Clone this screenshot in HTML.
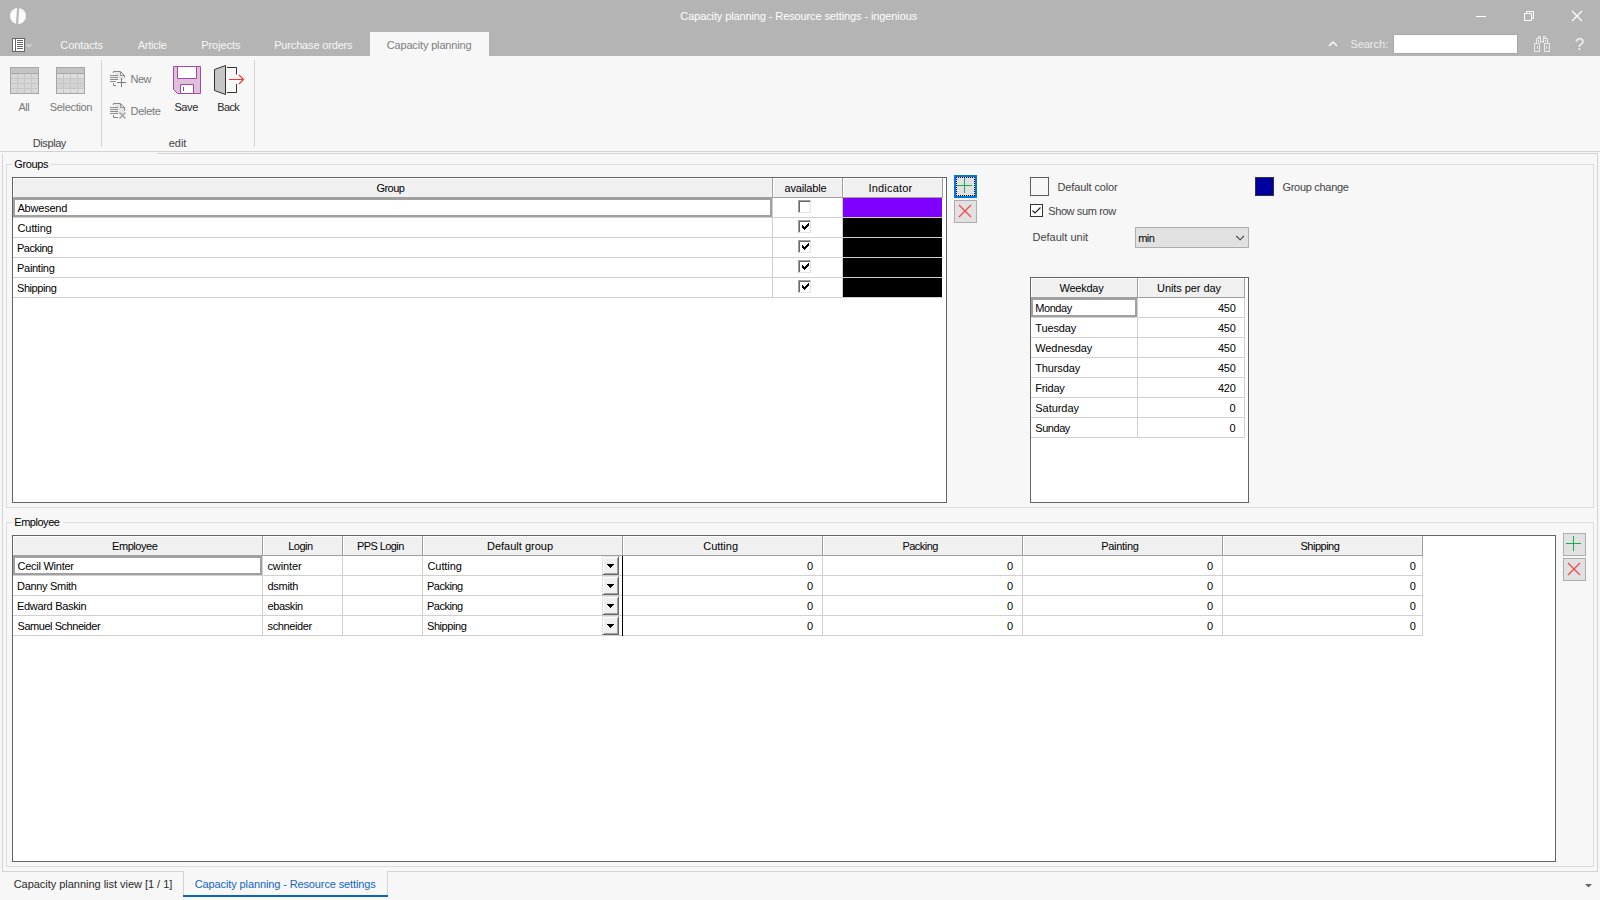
<!DOCTYPE html>
<html lang="en">
<head>
<meta charset="utf-8">
<title>Capacity planning - Resource settings - ingenious</title>
<style>
*{box-sizing:border-box;margin:0;padding:0}
html,body{width:1600px;height:900px;overflow:hidden;background:#f7f7f7}
body{position:relative;font-family:"Liberation Sans",sans-serif;font-size:11px;color:#000;line-height:13px}
.a{position:absolute;white-space:nowrap}
.t{position:absolute;white-space:nowrap;height:20px;line-height:20px}
.c{text-align:center}
.r{text-align:right}
#titlebar{left:0;top:0;width:1600px;height:56px;background:#b4b4b4}
.wt{color:#fff}
.tab{color:#f6f6f6}
.hl{position:absolute;height:1px;background:#d4d4d4}
.vl{position:absolute;width:1px;background:#d4d4d4}
.grid{position:absolute;border:1px solid #646464;background:#fff}
.hd{position:absolute;background:#f0f0f0;border-left:1px solid #fff;border-top:1px solid #fff;height:19px;text-align:center;line-height:18px}
.gl{position:absolute;background:#d0d0d0}
.hs{position:absolute;background:#a0a0a0}
.btn{position:absolute;width:23px;height:23px;background:#e1e1e1;border:1px solid #adadad}
.gb{position:absolute;border:1px solid #dcdcdc}
.gbl{position:absolute;background:#f7f7f7;padding:0 2px;height:13px;line-height:13px}
.cb3{position:absolute;width:13px;height:13px;background:#fff;border:1px solid;border-color:#a0a0a0 #e3e3e3 #e3e3e3 #a0a0a0;box-shadow:inset 1px 1px 0 #696969}
.dd{position:absolute;width:17px;height:19px;background:#f0f0f0;border:1px solid;border-color:#e3e3e3 #696969 #696969 #e3e3e3;box-shadow:inset 1px 1px 0 #fff,inset -1px -1px 0 #a0a0a0}
.dim{color:#808080}
.lbl{color:#444}
</style>
</head>
<body>
<div id="titlebar" class="a"></div>
<header aria-label="Title bar and main menu">
<svg class="a" style="left:9px;top:7px" width="18" height="18" viewBox="0 0 18 18"><ellipse cx="9" cy="9" rx="8" ry="8" fill="#fafafa"/><path d="M8.100 0.500 L10.400 0.500 L9.100 17.500 L6.900 17.500 Z" fill="#b9b9b9"/></svg>
<div class="t" style="left:680.30px;top:6px;letter-spacing:-0.110px;color:#fff">Capacity planning - Resource settings - ingenious</div>
<svg class="a" style="left:1470px;top:5px" width="120" height="22" viewBox="0 0 120 22" fill="none" stroke="#fff" stroke-width="1"><path d="M6 11.500 H16"/><path d="M54.500 8.500 H61.500 V15.500 H54.500 Z"/><path d="M56.500 8.500 V6.500 H63.500 V13.500 H61.500"/><path d="M102 6 L112 16 M112 6 L102 16" stroke-width="1.150"/></svg>
<svg class="a" style="left:12px;top:38px" width="22" height="14" viewBox="0 0 22 14" fill="none"><rect x="0.5" y="0.5" width="12" height="13" fill="#fff" stroke="#666"/><path d="M3.500 1 V13" stroke="#666"/><path d="M5 2.500 H11 M5 4.500 H11 M5 6.500 H11 M5 8.500 H11 M5 10.500 H11" stroke="#666"/><path d="M14.500 6.100 L17 8.600 L19.500 6.100" stroke="#dadada" stroke-width="1.100"/></svg>
<div class="t" style="left:60.30px;top:35px;letter-spacing:-0.100px;color:#f6f6f6">Contacts</div>
<div class="t" style="left:137.70px;top:35px;letter-spacing:-0.217px;color:#f6f6f6">Article</div>
<div class="t" style="left:201.20px;top:35px;letter-spacing:-0.043px;color:#f6f6f6">Projects</div>
<div class="t" style="left:274.20px;top:35px;letter-spacing:-0.164px;color:#f6f6f6">Purchase orders</div>
<div class="a" style="left:370px;top:32px;width:119px;height:24px;background:#f7f7f7"></div>
<div class="t" style="left:386.70px;top:35px;letter-spacing:-0.156px;color:#7d7d7d">Capacity planning</div>
<svg class="a" style="left:1326px;top:38px" width="14" height="12" viewBox="0 0 14 12" fill="none" stroke="#fff" stroke-width="1.400"><path d="M3 8 L7 4 L11 8"/></svg>
<div class="t" style="left:1350.40px;top:34px;letter-spacing:-0.033px;color:#ececec">Search:</div>
<div class="a" style="left:1393px;top:34px;width:125px;height:20px;background:#fff;border:1px solid #a9a9a9"></div>
<svg class="a" style="left:1533px;top:35px" width="18" height="18" viewBox="0 0 18 18" fill="none" stroke="#ebebeb" stroke-width="1"><path d="M1.500 8.500 H6.500 V16.500 H1.500 Z M11.500 8.500 H16.500 V16.500 H11.500 Z"/><path d="M3.500 8.500 V3.500 H7.500 V8 M10.500 8 V3.500 H14.500 V8.500"/><path d="M5.500 3.500 V1.500 H7.500 V3.500 M10.500 3.500 V1.500 H12.500 V3.500"/><path d="M8 6.500 H10 M4.500 11 V14 M13.500 11 V14 M5.500 5 V7 M12.500 5 V7"/></svg>
<div class="a" style="left:1575px;top:35px;font-size:16.5px;line-height:18px;color:#f2f2f2">?</div>
</header>
<div role="toolbar" aria-label="Ribbon">
<svg class="a" style="left:10px;top:66px" width="30" height="30" viewBox="0 0 30 30"><rect x="0.5" y="1.500" width="28" height="26" fill="#d6d6d6" stroke="#a6a6a6"/><rect x="1" y="2" width="27" height="5" fill="#c3c3c3"/><path d="M1 7.500 H28" stroke="#a6a6a6" fill="none"/><path d="M1 12.500 H28 M1 17.500 H28 M1 22.500 H28 M7.500 8 V27 M14.500 8 V27 M21.500 8 V27" stroke="#c6c6c6" fill="none"/></svg>
<svg class="a" style="left:56px;top:66px" width="30" height="30" viewBox="0 0 30 30"><rect x="0.5" y="1.500" width="28" height="26" fill="#dedede" stroke="#a6a6a6"/><rect x="1" y="2" width="27" height="5" fill="#c3c3c3"/><rect x="1" y="13" width="27" height="9" fill="#d2d2d2"/><path d="M1 7.500 H28" stroke="#a6a6a6" fill="none"/><path d="M1 12.500 H28 M1 17.500 H28 M1 22.500 H28 M7.500 8 V27 M14.500 8 V27 M21.500 8 V27" stroke="#c6c6c6" fill="none"/></svg>
<div class="t" style="left:18.60px;top:97px;letter-spacing:-0.600px;color:#787878">All</div>
<div class="t" style="left:49.80px;top:97px;letter-spacing:-0.325px;color:#787878">Selection</div>
<div class="t" style="left:32.80px;top:133px;letter-spacing:-0.417px;color:#444">Display</div>
<div class="vl" style="left:101px;top:60px;height:87px"></div>
<svg class="a" style="left:109px;top:70px" width="18" height="18" viewBox="0 0 18 18" fill="none" stroke="#858585"><path d="M6 2 H11.500 L15 5.500 V10 H6 Z" fill="#e6e6e6" stroke="none"/><path d="M4.500 3 V1.500 H11.500 L15.500 5.500 V7.500"/><path d="M11.500 1.500 V5.500 H15.500" stroke="#909090"/><path d="M1 5.500 H9 M1 7.500 H9 M1 9.500 H9 M1 11.500 H7" stroke="#8c8c8c"/><path d="M4.500 13 V15.500 H7"/><path d="M12.500 8 V17 M8 12.500 H17" stroke="#7a7a7a"/></svg>
<svg class="a" style="left:109px;top:102px" width="18" height="18" viewBox="0 0 18 18" fill="none" stroke="#858585"><path d="M6 2 H11.500 L15 5.500 V12 H6 Z" fill="#e6e6e6" stroke="none"/><path d="M4.500 3 V1.500 H11.500 L15.500 5.500 V9"/><path d="M11.500 1.500 V5.500 H15.500" stroke="#909090"/><path d="M1 5.500 H9 M1 7.500 H9 M1 9.500 H9 M1 11.500 H9" stroke="#8c8c8c"/><path d="M4.500 13 V15.500 H9"/><path d="M10.500 10.500 L16.500 16.500 M16.500 10.500 L10.500 16.500" stroke="#9a9a9a" stroke-width="1.200"/></svg>
<div class="t" style="left:130.60px;top:69px;letter-spacing:-0.600px;color:#787878">New</div>
<div class="t" style="left:130.60px;top:101px;letter-spacing:-0.300px;color:#787878">Delete</div>
<svg class="a" style="left:172px;top:65px" width="30" height="30" viewBox="0 0 30 30"><path d="M1.500 1.500 H28.500 V28.500 H5.500 L1.500 24.500 Z" fill="#e0bfdc" stroke="#a349a4"/><path d="M5.500 1.500 H24.500 V13.500 H5.500 Z" fill="#fff" stroke="#a349a4"/><path d="M8.500 19.500 H21.500 V28.500 H8.500 Z" fill="#fff" stroke="#a349a4"/><path d="M11.500 22 V26" stroke="#666" fill="none"/></svg>
<svg class="a" style="left:213px;top:64px" width="34" height="32" viewBox="0 0 34 32" fill="none"><path d="M1.500 5.500 L12.500 1.500 V30.500 L1.500 26.500 Z" fill="#c6c5c3" stroke="#333"/><path d="M14 3.500 H23.500 V10.500 M23.500 20 V28.500 H14" stroke="#333"/><path d="M16 15.500 H30 M26 11 L30.500 15.500 L26 20" stroke="#f03a3a" stroke-width="1.200"/></svg>
<div class="t" style="left:174.40px;top:97px;letter-spacing:-0.367px;color:#2a2a2a">Save</div>
<div class="t" style="left:217.20px;top:97px;letter-spacing:-0.600px;color:#2a2a2a">Back</div>
<div class="t" style="left:168.70px;top:133px;color:#444">edit</div>
<div class="vl" style="left:254px;top:60px;height:87px"></div>
<div class="hl" style="left:0;top:151px;width:1600px"></div>
<div class="hl" style="left:157px;top:153px;width:1441px"></div>
<div class="vl" style="left:2px;top:154px;height:718px"></div>
<div class="vl" style="left:1597px;top:154px;height:718px"></div>
</div>
<main>
<section aria-label="Groups">
<div class="gb" style="left:6px;top:164px;width:1588px;height:344px"></div>
<div class="gbl" style="left:12px;top:158px;width:39px"></div>
<div class="t" style="left:14.30px;top:154px;letter-spacing:-0.360px">Groups</div>
<div class="grid" style="left:12px;top:177px;width:935px;height:326px"></div>
<div class="hd" style="left:13px;top:178px;width:759px"></div>
<div class="hs" style="left:772px;top:178px;width:1px;height:19px"></div>
<div class="t" style="left:376.40px;top:178px;letter-spacing:-0.500px">Group</div>
<div class="hd" style="left:773px;top:178px;width:69px"></div>
<div class="hs" style="left:842px;top:178px;width:1px;height:19px"></div>
<div class="t" style="left:784.50px;top:178px;letter-spacing:-0.162px">available</div>
<div class="hd" style="left:843px;top:178px;width:99px"></div>
<div class="hs" style="left:942px;top:178px;width:1px;height:19px"></div>
<div class="t" style="left:868.50px;top:178px;letter-spacing:0.188px">Indicator</div>
<div class="hs" style="left:13px;top:197px;width:930px;height:1px"></div>
<div class="t" style="left:17.50px;top:198px;letter-spacing:-0.214px">Abwesend</div>
<div class="gl" style="left:13px;top:217px;width:929px;height:1px"></div>
<div class="a" style="left:843px;top:198px;width:99px;height:19px;background:#8000ff"></div>
<div class="cb3" style="left:798px;top:200px"></div>
<div class="t" style="left:17.50px;top:218px;letter-spacing:-0.083px">Cutting</div>
<div class="gl" style="left:13px;top:237px;width:929px;height:1px"></div>
<div class="a" style="left:843px;top:218px;width:99px;height:19px;background:#000"></div>
<div class="cb3" style="left:798px;top:220px"></div>
<svg class="a" style="left:802px;top:223px" width="7" height="7" viewBox="0 0 7 7"><path d="M0 2h1v3h-1z M1 3h1v3h-1z M2 4h1v3h-1z M3 3h1v3h-1z M4 2h1v3h-1z M5 1h1v3h-1z M6 0h1v3h-1z" fill="#000" shape-rendering="crispEdges"/></svg>
<div class="t" style="left:17.00px;top:238px;letter-spacing:-0.500px">Packing</div>
<div class="gl" style="left:13px;top:257px;width:929px;height:1px"></div>
<div class="a" style="left:843px;top:238px;width:99px;height:19px;background:#000"></div>
<div class="cb3" style="left:798px;top:240px"></div>
<svg class="a" style="left:802px;top:243px" width="7" height="7" viewBox="0 0 7 7"><path d="M0 2h1v3h-1z M1 3h1v3h-1z M2 4h1v3h-1z M3 3h1v3h-1z M4 2h1v3h-1z M5 1h1v3h-1z M6 0h1v3h-1z" fill="#000" shape-rendering="crispEdges"/></svg>
<div class="t" style="left:17.00px;top:258px;letter-spacing:-0.286px">Painting</div>
<div class="gl" style="left:13px;top:277px;width:929px;height:1px"></div>
<div class="a" style="left:843px;top:258px;width:99px;height:19px;background:#000"></div>
<div class="cb3" style="left:798px;top:260px"></div>
<svg class="a" style="left:802px;top:263px" width="7" height="7" viewBox="0 0 7 7"><path d="M0 2h1v3h-1z M1 3h1v3h-1z M2 4h1v3h-1z M3 3h1v3h-1z M4 2h1v3h-1z M5 1h1v3h-1z M6 0h1v3h-1z" fill="#000" shape-rendering="crispEdges"/></svg>
<div class="t" style="left:17.00px;top:278px;letter-spacing:-0.429px">Shipping</div>
<div class="gl" style="left:13px;top:297px;width:929px;height:1px"></div>
<div class="a" style="left:843px;top:278px;width:99px;height:19px;background:#000"></div>
<div class="cb3" style="left:798px;top:280px"></div>
<svg class="a" style="left:802px;top:283px" width="7" height="7" viewBox="0 0 7 7"><path d="M0 2h1v3h-1z M1 3h1v3h-1z M2 4h1v3h-1z M3 3h1v3h-1z M4 2h1v3h-1z M5 1h1v3h-1z M6 0h1v3h-1z" fill="#000" shape-rendering="crispEdges"/></svg>
<div class="gl" style="left:772px;top:198px;width:1px;height:100px"></div>
<div class="gl" style="left:842px;top:198px;width:1px;height:100px"></div>
<div class="a" style="left:13px;top:198px;width:759px;height:19px;border:2px solid #a0a0a0"></div>
<div class="btn" style="left:954px;top:175px;border:2px solid #0078d7"><div class="a" style="left:0;top:0;width:19px;height:19px;border:1px dotted #000"></div></div>
<svg class="a" style="left:954px;top:175px" width="23" height="23" viewBox="0 0 23 23" fill="none" stroke="#1cac4f" stroke-width="1"><path d="M10.500 3 V18 M3 10.500 H18"/></svg>
<div class="btn" style="left:954px;top:200px"></div>
<svg class="a" style="left:954px;top:200px" width="23" height="23" viewBox="0 0 23 23" fill="none" stroke="#f0484c" stroke-width="1.300"><path d="M5 5 L17 17 M17 5 L5 17"/></svg>
<div aria-label="Settings">
<div class="a" style="left:1030px;top:177px;width:19px;height:19px;background:#f7f7f7;border:1px solid #5c5c5c"></div>
<div class="t" style="left:1057.50px;top:177px;letter-spacing:-0.125px;color:#444">Default color</div>
<div class="a" style="left:1255px;top:177px;width:19px;height:19px;background:#0000a0;border:1px solid #333"></div>
<div class="t" style="left:1282.50px;top:177px;letter-spacing:-0.300px;color:#444">Group change</div>
<div class="a" style="left:1030px;top:204px;width:13px;height:13px;background:#fff;border:1px solid #333"></div>
<svg class="a" style="left:1030px;top:204px" width="13" height="13" viewBox="0 0 13 13" fill="none" stroke="#222" stroke-width="1.200"><path d="M2.500 6.500 L5 9 L10.500 3.500"/></svg>
<div class="t" style="left:1048.20px;top:201px;letter-spacing:-0.382px;color:#444">Show sum row</div>
<div class="t" style="left:1032.50px;top:227px;color:#444">Default unit</div>
<div class="a" style="left:1135px;top:227px;width:114px;height:21px;background:#e1e1e1;border:1px solid #adadad"></div>
<div class="t" style="left:1138.20px;top:228px;letter-spacing:-0.500px">min</div>
<svg class="a" style="left:1234px;top:233px" width="12" height="9" viewBox="0 0 12 9" fill="none" stroke="#444" stroke-width="1.100"><path d="M2.300 3 L6.100 6.800 L9.900 3"/></svg>
<div class="grid" style="left:1030px;top:277px;width:219px;height:226px"></div>
<div class="hd" style="left:1031px;top:278px;width:106px"></div>
<div class="hs" style="left:1137px;top:278px;width:1px;height:19px"></div>
<div class="t" style="left:1059.50px;top:278px;letter-spacing:-0.250px">Weekday</div>
<div class="hd" style="left:1138px;top:278px;width:106px"></div>
<div class="hs" style="left:1244px;top:278px;width:1px;height:19px"></div>
<div class="t" style="left:1157.00px;top:278px;letter-spacing:-0.067px">Units per day</div>
<div class="hs" style="left:1031px;top:297px;width:214px;height:1px"></div>
<div class="t" style="left:1035.30px;top:298px;letter-spacing:-0.460px">Monday</div>
<div class="t" style="left:1218.00px;top:298px;letter-spacing:-0.300px">450</div>
<div class="gl" style="left:1031px;top:317px;width:214px;height:1px"></div>
<div class="t" style="left:1035.30px;top:318px;letter-spacing:-0.133px">Tuesday</div>
<div class="t" style="left:1218.00px;top:318px;letter-spacing:-0.300px">450</div>
<div class="gl" style="left:1031px;top:337px;width:214px;height:1px"></div>
<div class="t" style="left:1035.30px;top:338px;letter-spacing:-0.112px">Wednesday</div>
<div class="t" style="left:1218.00px;top:338px;letter-spacing:-0.300px">450</div>
<div class="gl" style="left:1031px;top:357px;width:214px;height:1px"></div>
<div class="t" style="left:1035.30px;top:358px;letter-spacing:-0.143px">Thursday</div>
<div class="t" style="left:1218.00px;top:358px;letter-spacing:-0.300px">450</div>
<div class="gl" style="left:1031px;top:377px;width:214px;height:1px"></div>
<div class="t" style="left:1035.30px;top:378px;letter-spacing:-0.200px">Friday</div>
<div class="t" style="left:1218.00px;top:378px;letter-spacing:-0.300px">420</div>
<div class="gl" style="left:1031px;top:397px;width:214px;height:1px"></div>
<div class="t" style="left:1035.30px;top:398px;letter-spacing:-0.043px">Saturday</div>
<div class="t" style="left:1229.40px;top:398px">0</div>
<div class="gl" style="left:1031px;top:417px;width:214px;height:1px"></div>
<div class="t" style="left:1035.30px;top:418px;letter-spacing:-0.460px">Sunday</div>
<div class="t" style="left:1229.40px;top:418px">0</div>
<div class="gl" style="left:1031px;top:437px;width:214px;height:1px"></div>
<div class="gl" style="left:1137px;top:298px;width:1px;height:140px"></div>
<div class="gl" style="left:1244px;top:298px;width:1px;height:140px"></div>
<div class="a" style="left:1031px;top:298px;width:106px;height:19px;border:2px solid #a0a0a0"></div>
</div>
</section>
<section aria-label="Employee">
<div class="gb" style="left:6px;top:522px;width:1588px;height:345px"></div>
<div class="gbl" style="left:12px;top:516px;width:51px"></div>
<div class="t" style="left:14.30px;top:512px;letter-spacing:-0.471px">Employee</div>
<div class="grid" style="left:12px;top:535px;width:1544px;height:327px"></div>
<div class="hd" style="left:13px;top:536px;width:249px"></div>
<div class="hs" style="left:262px;top:536px;width:1px;height:19px"></div>
<div class="t" style="left:112.00px;top:536px;letter-spacing:-0.429px">Employee</div>
<div class="hd" style="left:263px;top:536px;width:79px"></div>
<div class="hs" style="left:342px;top:536px;width:1px;height:19px"></div>
<div class="t" style="left:288.20px;top:536px;letter-spacing:-0.500px">Login</div>
<div class="hd" style="left:343px;top:536px;width:79px"></div>
<div class="hs" style="left:422px;top:536px;width:1px;height:19px"></div>
<div class="t" style="left:357.10px;top:536px;letter-spacing:-0.600px">PPS Login</div>
<div class="hd" style="left:423px;top:536px;width:199px"></div>
<div class="hs" style="left:622px;top:536px;width:1px;height:19px"></div>
<div class="t" style="left:487.00px;top:536px">Default group</div>
<div class="hd" style="left:623px;top:536px;width:199px"></div>
<div class="hs" style="left:822px;top:536px;width:1px;height:19px"></div>
<div class="t" style="left:703.20px;top:536px">Cutting</div>
<div class="hd" style="left:823px;top:536px;width:199px"></div>
<div class="hs" style="left:1022px;top:536px;width:1px;height:19px"></div>
<div class="t" style="left:902.50px;top:536px;letter-spacing:-0.550px">Packing</div>
<div class="hd" style="left:1023px;top:536px;width:199px"></div>
<div class="hs" style="left:1222px;top:536px;width:1px;height:19px"></div>
<div class="t" style="left:1101.20px;top:536px;letter-spacing:-0.286px">Painting</div>
<div class="hd" style="left:1223px;top:536px;width:199px"></div>
<div class="hs" style="left:1422px;top:536px;width:1px;height:19px"></div>
<div class="t" style="left:1300.50px;top:536px;letter-spacing:-0.500px">Shipping</div>
<div class="hs" style="left:13px;top:555px;width:1410px;height:1px"></div>
<div class="t" style="left:17.50px;top:556px;letter-spacing:-0.255px">Cecil Winter</div>
<div class="t" style="left:267.50px;top:556px;letter-spacing:-0.133px">cwinter</div>
<div class="t" style="left:427.50px;top:556px;letter-spacing:-0.083px">Cutting</div>
<div class="t" style="left:807.00px;top:556px">0</div>
<div class="t" style="left:1007.00px;top:556px">0</div>
<div class="t" style="left:1207.00px;top:556px">0</div>
<div class="t" style="left:1409.80px;top:556px">0</div>
<div class="gl" style="left:13px;top:575px;width:1410px;height:1px"></div>
<div class="dd" style="left:602px;top:556px"></div>
<svg class="a" style="left:607px;top:564px" width="7" height="4" viewBox="0 0 7 4"><path d="M0 0 H7 V1 H6 V2 H5 V3 H4 V4 H3 V3 H2 V2 H1 V1 H0 Z" fill="#000" shape-rendering="crispEdges"/></svg>
<div class="t" style="left:17.00px;top:576px;letter-spacing:-0.300px">Danny Smith</div>
<div class="t" style="left:267.50px;top:576px;letter-spacing:-0.300px">dsmith</div>
<div class="t" style="left:427.00px;top:576px;letter-spacing:-0.500px">Packing</div>
<div class="t" style="left:807.00px;top:576px">0</div>
<div class="t" style="left:1007.00px;top:576px">0</div>
<div class="t" style="left:1207.00px;top:576px">0</div>
<div class="t" style="left:1409.80px;top:576px">0</div>
<div class="gl" style="left:13px;top:595px;width:1410px;height:1px"></div>
<div class="dd" style="left:602px;top:576px"></div>
<svg class="a" style="left:607px;top:584px" width="7" height="4" viewBox="0 0 7 4"><path d="M0 0 H7 V1 H6 V2 H5 V3 H4 V4 H3 V3 H2 V2 H1 V1 H0 Z" fill="#000" shape-rendering="crispEdges"/></svg>
<div class="t" style="left:17.00px;top:596px;letter-spacing:-0.317px">Edward Baskin</div>
<div class="t" style="left:267.50px;top:596px;letter-spacing:-0.383px">ebaskin</div>
<div class="t" style="left:427.00px;top:596px;letter-spacing:-0.500px">Packing</div>
<div class="t" style="left:807.00px;top:596px">0</div>
<div class="t" style="left:1007.00px;top:596px">0</div>
<div class="t" style="left:1207.00px;top:596px">0</div>
<div class="t" style="left:1409.80px;top:596px">0</div>
<div class="gl" style="left:13px;top:615px;width:1410px;height:1px"></div>
<div class="dd" style="left:602px;top:596px"></div>
<svg class="a" style="left:607px;top:604px" width="7" height="4" viewBox="0 0 7 4"><path d="M0 0 H7 V1 H6 V2 H5 V3 H4 V4 H3 V3 H2 V2 H1 V1 H0 Z" fill="#000" shape-rendering="crispEdges"/></svg>
<div class="t" style="left:17.50px;top:616px;letter-spacing:-0.453px">Samuel Schneider</div>
<div class="t" style="left:267.50px;top:616px;letter-spacing:-0.375px">schneider</div>
<div class="t" style="left:427.00px;top:616px;letter-spacing:-0.429px">Shipping</div>
<div class="t" style="left:807.00px;top:616px">0</div>
<div class="t" style="left:1007.00px;top:616px">0</div>
<div class="t" style="left:1207.00px;top:616px">0</div>
<div class="t" style="left:1409.80px;top:616px">0</div>
<div class="gl" style="left:13px;top:635px;width:1410px;height:1px"></div>
<div class="dd" style="left:602px;top:616px"></div>
<svg class="a" style="left:607px;top:624px" width="7" height="4" viewBox="0 0 7 4"><path d="M0 0 H7 V1 H6 V2 H5 V3 H4 V4 H3 V3 H2 V2 H1 V1 H0 Z" fill="#000" shape-rendering="crispEdges"/></svg>
<div class="gl" style="left:262px;top:556px;width:1px;height:80px"></div>
<div class="gl" style="left:342px;top:556px;width:1px;height:80px"></div>
<div class="gl" style="left:422px;top:556px;width:1px;height:80px"></div>
<div class="gl" style="left:822px;top:556px;width:1px;height:80px"></div>
<div class="gl" style="left:1022px;top:556px;width:1px;height:80px"></div>
<div class="gl" style="left:1222px;top:556px;width:1px;height:80px"></div>
<div class="gl" style="left:1422px;top:556px;width:1px;height:80px"></div>
<div class="a" style="left:622px;top:556px;width:1px;height:80px;background:#000"></div>
<div class="a" style="left:13px;top:556px;width:249px;height:19px;border:2px solid #a0a0a0"></div>
<div class="btn" style="left:1563px;top:533px"></div>
<svg class="a" style="left:1563px;top:533px" width="23" height="23" viewBox="0 0 23 23" fill="none" stroke="#1cac4f" stroke-width="1"><path d="M10.500 3 V18 M3 10.500 H18"/></svg>
<div class="btn" style="left:1563px;top:558px"></div>
<svg class="a" style="left:1563px;top:558px" width="23" height="23" viewBox="0 0 23 23" fill="none" stroke="#f0484c" stroke-width="1.300"><path d="M5 5 L17 17 M17 5 L5 17"/></svg>
</section>
</main>
<footer aria-label="Open views">
<div class="hl" style="left:2px;top:871px;width:182px"></div>
<div class="vl" style="left:183px;top:871px;height:25px"></div>
<div class="vl" style="left:387px;top:871px;height:25px"></div>
<div class="hl" style="left:387px;top:871px;width:1211px"></div>
<div class="a" style="left:183px;top:895px;width:205px;height:2px;background:#0a64c0"></div>
<div class="t" style="left:13.70px;top:874px;letter-spacing:-0.029px;color:#2a2a2a">Capacity planning list view [1 / 1]</div>
<div class="t" style="left:194.80px;top:874px;letter-spacing:-0.119px;color:#1166c6">Capacity planning - Resource settings</div>
<svg class="a" style="left:1585px;top:884px" width="7" height="4" viewBox="0 0 7 4"><path d="M0 0 H7 L3.500 3.500 Z" fill="#666"/></svg>
</footer>
</body>
</html>
